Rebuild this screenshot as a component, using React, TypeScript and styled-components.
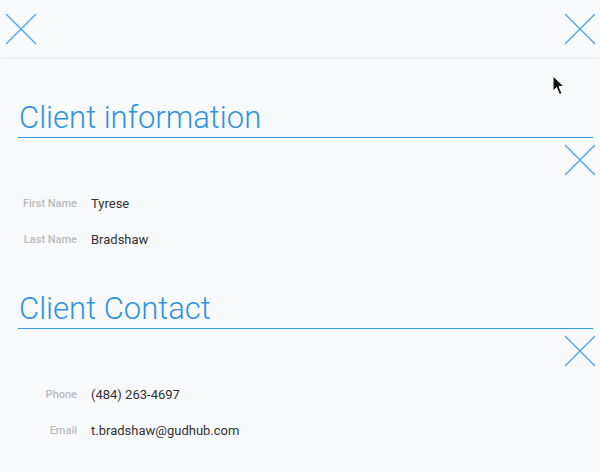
import styled, { createGlobalStyle } from 'styled-components'

const GlobalStyle = createGlobalStyle`
    html, body {
        margin: 0;
        padding: 0;
        background: #f8f9fb;
        font-family: Roboto, "Liberation Sans", sans-serif;
    }
`

const Page = styled.div`
    position: relative;
    width: 600px;
    height: 472px;
    overflow: hidden;
    background: #f8f9fb;
`

const Header = styled.div`
    display: flex;
    justify-content: space-between;
    align-items: center;
    height: 57px;
    padding: 0 4px 0 5px;
    background: #f9fafc;
    box-shadow: 0 1px 3px rgba(0, 0, 0, 0.08);
    position: relative;
`

const CloseButton = styled.button`
    display: flex;
    padding: 0;
    border: none;
    background: transparent;
    cursor: pointer;
`

const Content = styled.div`
    padding: 0 7px 0 18px;
`

const Section = styled.section`
    display: flex;
    flex-direction: column;
`

const Title = styled.h2<{ top: number }>`
    margin: ${(p) => p.top}px 0 0;
    padding: 0 0 0 1px;
    font-family: Roboto, "Liberation Sans", sans-serif;
    font-weight: 300;
    font-size: 31px;
    line-height: 38px;
    color: #2f93e2;
    border-bottom: 1px solid #2f9be9;
`

const ActionRow = styled.div`
    display: flex;
    justify-content: flex-end;
    padding-top: 6px;
    margin-right: -3px;
`

const Fields = styled.div`
    display: flex;
    flex-direction: column;
    gap: 19px;
    padding-top: 19px;
`

const FieldRow = styled.div`
    display: grid;
    grid-template-columns: 59px 1fr;
    gap: 14px;
    align-items: center;
    height: 17px;
`

const FieldLabel = styled.label`
    text-align: right;
    font-size: 11px;
    font-weight: 500;
    color: #b9bbbe;
`

const FieldValue = styled.span`
    font-size: 13px;
    color: #333;
`

const Cursor = styled.svg`
    position: absolute;
    left: 552px;
    top: 75px;
`

const CloseIcon = () => (
    <svg width="32" height="32" viewBox="0 0 32 32">
        <path d="M1 1 L31 31 M31 1 L1 31" stroke="#4ba6ec" strokeWidth="1.4" fill="none" />
    </svg>
)

interface Field {
    label: string
    value: string
}

const sections: { title: string; top: number; fields: Field[] }[] = [
    {
        title: 'Client information',
        top: 42,
        fields: [
            { label: 'First Name', value: 'Tyrese' },
            { label: 'Last Name', value: 'Bradshaw' },
        ],
    },
    {
        title: 'Client Contact',
        top: 42,
        fields: [
            { label: 'Phone', value: '(484) 263-4697' },
            { label: 'Email', value: 't.bradshaw@gudhub.com' },
        ],
    },
]

const App = () => {
    return (
        <Page>
            <GlobalStyle />
            <Header>
                <CloseButton>
                    <CloseIcon />
                </CloseButton>
                <CloseButton>
                    <CloseIcon />
                </CloseButton>
            </Header>
            <Content>
                {sections.map((s) => (
                    <Section key={s.title}>
                        <Title top={s.top}>{s.title}</Title>
                        <ActionRow>
                            <CloseButton>
                                <CloseIcon />
                            </CloseButton>
                        </ActionRow>
                        <Fields>
                            {s.fields.map((f) => (
                                <FieldRow key={f.label}>
                                    <FieldLabel>{f.label}</FieldLabel>
                                    <FieldValue>{f.value}</FieldValue>
                                </FieldRow>
                            ))}
                        </Fields>
                    </Section>
                ))}
            </Content>
            <Cursor width="14" height="22" viewBox="0 0 14 22">
                <path d="M1 1 L1 16 L4.5 12.5 L7.5 19.5 L10 18.5 L7 11.5 L12 11.5 Z" fill="#111" stroke="#fff" strokeWidth="1" />
            </Cursor>
        </Page>
    )
}

export default App
